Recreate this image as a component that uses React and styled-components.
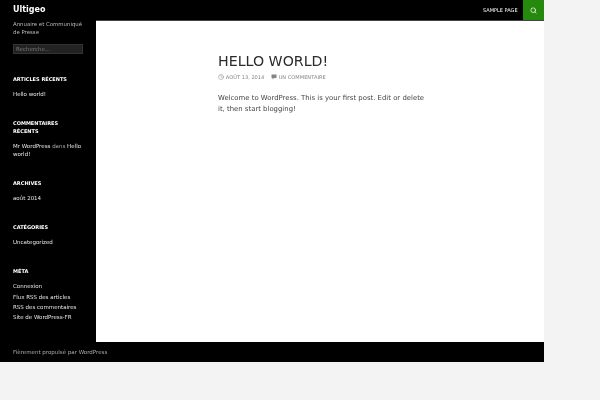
import styled, { createGlobalStyle } from "styled-components"
import { Search, Clock } from "lucide-react"

const Global = createGlobalStyle`
  html, body { margin: 0; padding: 0; background: #f3f3f3; }
  body { font-family: "DejaVu Sans", sans-serif; }
`

const Page = styled.div`
  width: 544px;
  height: 362px;
  display: flex;
  flex-direction: column;
  background: #000;
`

const Header = styled.header`
  height: 20px;
  flex: none;
  display: flex;
  align-items: center;
  justify-content: space-between;
  padding-left: 13px;
`

const SiteTitle = styled.div`
  color: #fff;
  font-size: 8px;
  font-weight: 700;
  line-height: 20px;
  will-change: transform;
  filter: blur(0.25px);
`

const Nav = styled.nav`
  display: flex;
  align-items: center;
  height: 100%;
`

const NavLink = styled.a`
  color: #fff;
  font-size: 5px;
  line-height: 20px;
  padding-right: 5px;
  will-change: transform;
  filter: blur(0.25px);
`

const SearchButton = styled.div`
  width: 21px;
  height: 100%;
  background: #24890d;
  color: #fff;
  display: flex;
  align-items: center;
  justify-content: center;
`

const Body = styled.div`
  flex: 1;
  display: flex;
  min-height: 0;
`

const Sidebar = styled.aside`
  width: 96px;
  flex: none;
  padding: 0 13px;
  box-sizing: border-box;
  will-change: transform;
  filter: blur(0.25px);
`

const Description = styled.p`
  margin: 0;
  color: #bbb;
  font-size: 5.4px;
  line-height: 8px;
`

const SearchField = styled.div`
  margin-top: 8px;
  height: 10px;
  width: 70px;
  box-sizing: border-box;
  border: 1px solid #333;
  background: #222;
  color: #777;
  font-size: 5.5px;
  line-height: 8px;
  padding-left: 2px;
`

const Widget = styled.section`
  margin-top: 20.7px;
`

const WidgetTitle = styled.h3`
  margin: 0;
  color: #fff;
  font-size: 5px;
  font-weight: 700;
  line-height: 8px;
  text-transform: uppercase;
`

const LinkList = styled.ul`
  list-style: none;
  margin: 7.4px 0 0;
  padding: 0;
`

const Item = styled.li`
  color: #e6e6e6;
  font-size: 5.5px;
  line-height: 8px;
  margin-bottom: 2.2px;
`

const Muted = styled.span`
  color: #aaa;
`

const Main = styled.main`
  flex: 1;
  background: #fff;
  padding: 31px 0 0 122px;
  border-top: 1px solid #444;
  box-sizing: border-box;
`

const Article = styled.article`
  width: 208px;
  will-change: transform;
  filter: blur(0.25px);
`

const Title = styled.h1`
  margin: 0;
  color: #2b2b2b;
  font-size: 14.2px;
  font-weight: 400;
  line-height: 18px;
  text-transform: uppercase;
`

const Meta = styled.div`
  margin-top: 3px;
  display: flex;
  align-items: center;
  gap: 6.5px;
  color: #858585;
  font-size: 5.1px;
  line-height: 8px;
  text-transform: uppercase;
`

const MetaItem = styled.span`
  display: flex;
  align-items: center;
  gap: 1.8px;
`

const Text = styled.p`
  margin: 12px 0 0;
  color: #444;
  font-size: 6.9px;
  line-height: 11px;
`

const Footer = styled.footer`
  height: 20px;
  flex: none;
  padding-left: 13px;
  color: #aaa;
  font-size: 5.5px;
  line-height: 20px;
  will-change: transform;
  filter: blur(0.25px);
`

export default function App() {
  return (
    <>
      <Global />
      <Page>
        <Header>
          <SiteTitle>Ultigeo</SiteTitle>
          <Nav>
            <NavLink>SAMPLE PAGE</NavLink>
            <SearchButton>
              <Search size={7} strokeWidth={2.5} />
            </SearchButton>
          </Nav>
        </Header>
        <Body>
          <Sidebar>
            <Description>Annuaire et Communiqué de Presse</Description>
            <SearchField>Recherche…</SearchField>
            <Widget>
              <WidgetTitle>Articles récents</WidgetTitle>
              <LinkList>
                <Item>Hello world!</Item>
              </LinkList>
            </Widget>
            <Widget>
              <WidgetTitle>Commentaires récents</WidgetTitle>
              <LinkList>
                <Item>Mr WordPress <Muted>dans</Muted> Hello world!</Item>
              </LinkList>
            </Widget>
            <Widget>
              <WidgetTitle>Archives</WidgetTitle>
              <LinkList>
                <Item>août 2014</Item>
              </LinkList>
            </Widget>
            <Widget>
              <WidgetTitle>Catégories</WidgetTitle>
              <LinkList>
                <Item>Uncategorized</Item>
              </LinkList>
            </Widget>
            <Widget>
              <WidgetTitle>Méta</WidgetTitle>
              <LinkList>
                <Item>Connexion</Item>
                <Item>Flux RSS des articles</Item>
                <Item>RSS des commentaires</Item>
                <Item>Site de WordPress-FR</Item>
              </LinkList>
            </Widget>
          </Sidebar>
          <Main>
            <Article>
              <Title>Hello world!</Title>
              <Meta>
                <MetaItem>
                  <Clock size={6} strokeWidth={2} />
                  Août 13, 2014
                </MetaItem>
                <MetaItem>
                  <svg width="6" height="6" viewBox="0 0 12 12">
                    <path d="M1 1h10v7H6l-3 3V8H1z" fill="currentColor" />
                  </svg>
                  Un commentaire
                </MetaItem>
              </Meta>
              <Text>Welcome to WordPress. This is your first post. Edit or delete it, then start blogging!</Text>
            </Article>
          </Main>
        </Body>
        <Footer>Fièrement propulsé par WordPress</Footer>
      </Page>
    </>
  )
}
